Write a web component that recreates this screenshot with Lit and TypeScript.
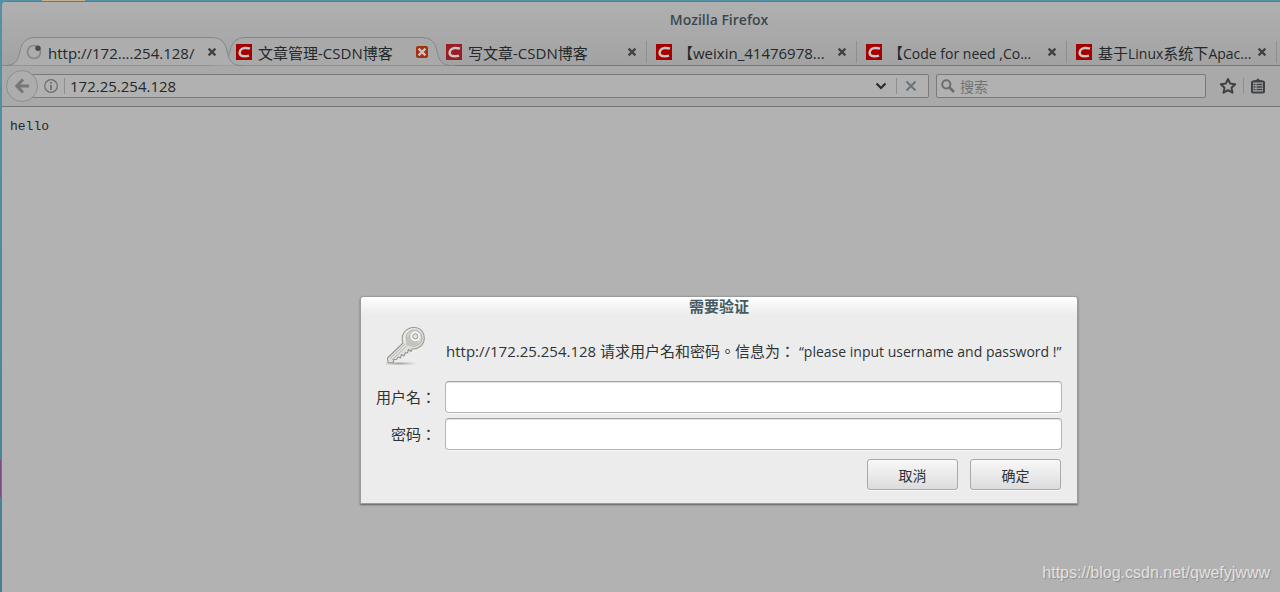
import { LitElement, html, css, svg, nothing } from "lit";
import type { TemplateResult } from "lit";
import { customElement } from "lit/decorators.js";
import { classMap } from "lit/directives/class-map.js";

interface Tab {
  title: string | TemplateResult;
  icon: "spinner" | "csdn" | "csdn-soft";
  state?: "selected" | "hover";
}

const TABS: Tab[] = [
  { title: "http://172....254.128/", icon: "spinner", state: "selected" },
  { title: "文章管理-CSDN博客", icon: "csdn", state: "hover" },
  { title: "写文章-CSDN博客", icon: "csdn-soft" },
  { title: "【weixin_41476978...", icon: "csdn" },
  { title: html`【<span class="latin">Code for need ,Co...</span>`, icon: "csdn" },
  { title: html`基于<span class="latin">Linux</span>系统下<span class="latin">Apac...</span>`, icon: "csdn" },
];

const TAB_EDGE =
  "M0 28.5 H3 C13 28.5 16 24 18 14 C20 5 24 .5 34 .5 H209 C219 .5 223 5 225 14 C227 24 230 28.5 240 28.5 H243";

@customElement("browser-tab")
class BrowserTab extends LitElement {
  static properties = { tab: { attribute: false } };
  declare tab: Tab;

  static styles = css`
    :host {
      display: block;
      flex: none;
      width: 210px;
      height: 29px;
      position: relative;
    }
    :host(.selected) {
      z-index: 2;
    }
    .edge {
      position: absolute;
      left: -14px;
      top: 0;
      width: 243px;
      height: 29px;
      stroke: #83888c;
      fill: #a9a9a9;
    }
    .edge.selected {
      fill: #adadad;
    }
    .body {
      position: relative;
      box-sizing: border-box;
      height: 22px;
      margin-top: 4px;
      padding: 0 7px 0 10px;
      display: flex;
      align-items: center;
    }
    .body.divided {
      box-shadow: 1px 0 #8f8f8f;
    }
    .icon {
      flex: none;
      width: 16px;
      height: 16px;
      margin-right: 6px;
    }
    .title {
      flex: 1;
      white-space: pre;
      line-height: 20px;
      padding-top: 2px;
    }
    .latin {
      font-size: 14px;
    }
    .close {
      flex: none;
      width: 14px;
      height: 14px;
      border: 0;
      padding: 0;
      background: none;
    }
    .close svg {
      display: block;
    }
  `;

  private icon() {
    if (this.tab.icon === "spinner") {
      return html`<svg class="icon" viewBox="0 0 16 16">
        <circle cx="8" cy="8" r="6.5" fill="none" stroke="#868686" stroke-width="1.7" />
        <circle cx="12" cy="4.3" r="2.7" fill="#4b4b4b" />
      </svg>`;
    }
    const fill = this.tab.icon === "csdn" ? "#a50000" : "#9c1c26";
    return html`<svg class="icon" viewBox="0 0 16 16">
      <rect width="16" height="16" fill=${fill} />
      <path
        d="M14 4.7 C11 3.6 5.9 3.3 4.4 6.2 C2.4 10.2 4.6 12.1 8.2 12.2 C10 12.2 11.6 12.1 13 11.6"
        fill="none" stroke="#c9c4c4" stroke-width="2.5" />
    </svg>`;
  }

  render() {
    const { state, title } = this.tab;
    const hot = state === "hover";
    return html`
      ${state
        ? html`<svg class=${classMap({ edge: true, selected: state === "selected" })} viewBox="0 0 243 29">
            <path d=${TAB_EDGE} />
          </svg>`
        : nothing}
      <div class=${classMap({ body: true, divided: !state })}>
        ${this.icon()}
        <span class="title">${title}</span>
        <button class="close" aria-label="关闭标签页">
          <svg width="14" height="14" viewBox="0 0 14 14">
            ${hot ? svg`<rect x="1" y="1" width="12" height="12" rx="2" fill="#a3300f" />` : nothing}
            <path d="M3.600 3.600 L10.400 10.400 M10.400 3.600 L3.600 10.400" stroke=${hot ? "#c4c4c4" : "#3e4345"} stroke-width="2.300" />
          </svg>
        </button>
      </div>
    `;
  }
}

@customElement("auth-dialog")
class AuthDialog extends LitElement {
  static styles = css`
    :host {
      display: block;
      width: 716px;
      box-sizing: border-box;
      background: #ececec;
      border-radius: 3px 3px 0 0;
      box-shadow: 0 0 0 1px #9b9b9b, 0 1px 2px 1px #606060;
      color: #2e3436;
      font-family: "Open Sans", "Noto Sans CJK TC", sans-serif;
    }
    .caption {
      margin: 0;
      font-size: 15px;
      line-height: 18px;
      text-align: center;
      color: #455a62;
      background: linear-gradient(#ffffff, #ececec);
      border-radius: 3px 3px 0 0;
    }
    .form {
      display: grid;
      grid-template-columns: 60px 1fr;
      column-gap: 9px;
      row-gap: 5px;
      align-items: center;
      padding: 11px 15px 13px;
    }
    .head {
      height: 50px;
      text-align: center;
    }
    .key {
      width: 40px;
      height: 40px;
    }
    .message {
      margin: 0;
      padding-left: 1px;
      white-space: nowrap;
      line-height: 20px;
    }
    .realm {
      font-size: 14px;
    }
    .label {
      text-align: right;
      white-space: nowrap;
      line-height: 20px;
    }
    .field {
      box-sizing: border-box;
      width: 100%;
      height: 32px;
      border: 1px solid #b4b4b4;
      border-top-color: #a4a4a4;
      border-radius: 4px;
      background: #fff;
      box-shadow: inset 0 1px #e2e2e2, 0 1px #f8f8f8;
      padding: 0 6px;
      font: inherit;
      outline: 0;
    }
    .actions {
      grid-column: 1 / -1;
      display: flex;
      justify-content: flex-end;
      gap: 12px;
      padding: 4px 1px 0 0;
    }
    .button {
      box-sizing: border-box;
      width: 91px;
      height: 31px;
      padding: 0;
      border: 1px solid #a9a9a9;
      border-radius: 3px;
      background: linear-gradient(#f8f8f8, #dcdcdc);
      box-shadow: 0 1px #f8f8f8;
      color: inherit;
      font: inherit;
      font-size: 14px;
    }
  `;

  render() {
    return html`
      <h2 class="caption" id="caption">需要验证</h2>
      <form class="form" role="dialog" aria-labelledby="caption" @submit=${(e: Event) => e.preventDefault()}>
        <div class="head">
          <svg class="key" viewBox="0 0 40 40">
            <defs>
              <linearGradient id="steel" x1="0" y1="0" x2="1" y2="1">
                <stop offset="0" stop-color="#fbfbf9" />
                <stop offset="1" stop-color="#c9cac4" />
              </linearGradient>
              <radialGradient id="ground">
                <stop offset="0" stop-color="#777" stop-opacity=".6" />
                <stop offset="1" stop-color="#777" stop-opacity="0" />
              </radialGradient>
            </defs>
            <ellipse cx="13" cy="37.5" rx="19" ry="2" fill="url(#ground)" />
            <path
              d="M17 17 C14 9 20 1.500 28 1.500 C35 1.500 38.500 7 38.300 12.500 C38 19 32.500 23.500 26 23 L25 25.500 L22.500 23.500 L21.500 27 L19.500 26.500 L18 30 L15.500 28.500 L14.500 32 L12 31 L10.500 33.500 L8 33.500 L7 37 L2 36.500 L1.500 32 Z"
              fill="url(#steel)" stroke="#96988f" stroke-width="1.100" stroke-linejoin="round" />
            <path d="M19 18 L4 32.500 M20.500 20 L6 34" stroke="#a3a49c" stroke-width=".8" fill="none" />
            <circle cx="28" cy="12" r="8" fill="#d6d7d1" stroke="#b0b1aa" />
            <path d="M20 19 C20 13 22 8 27 5 L33 18 C30 22 25 21 20 19 Z" fill="#c3c4bd" />
            <circle cx="29.300" cy="10.300" r="3.500" fill="#e4e4e0" stroke="#fafafa" stroke-width="2.600" />
            <circle cx="29.300" cy="10.300" r="2.600" fill="#e4e4e0" stroke="#90928a" />
          </svg>
        </div>
        <p class="message">http://172.25.254.128 请求用户名和密码。信息为： <span class="realm">“please input username and password !”</span></p>
        <label class="label" for="user">用户名：</label>
        <input class="field" id="user" type="text" />
        <label class="label" for="pass">密码：</label>
        <input class="field" id="pass" type="password" />
        <div class="actions">
          <button class="button" type="button">取消</button>
          <button class="button" type="submit">确定</button>
        </div>
      </form>
    `;
  }
}

@customElement("app-root")
class AppRoot extends LitElement {
  static styles = css`
    :host {
      display: block;
      box-sizing: border-box;
      min-height: 100vh;
      padding: 1px 0 0 2px;
      background: linear-gradient(#5591a6, #4d8ba3 50%, #457f96);
      font-family: "Open Sans", "Noto Sans CJK SC", sans-serif;
      font-size: 15px;
      color: #23282a;
      overflow: hidden;
      position: relative;
    }
    .sticker {
      position: absolute;
      left: 42px;
      top: 0;
      width: 43px;
      height: 1px;
      background: #c2b28e;
    }
    .launcher {
      position: absolute;
      left: 0;
      top: 460px;
      width: 1px;
      height: 37px;
      background: #7a4a80;
    }
    .window {
      position: relative;
      display: flex;
      flex-direction: column;
      min-height: calc(100vh - 1px);
      background: #b2b2b2;
      border-radius: 5px 0 0 0;
      overflow: hidden;
    }
    .chrome {
      background: linear-gradient(#b0b0b0, #a3a3a3 60px);
      border-top: 1px solid #6f7678;
      border-bottom: 1px solid #747474;
    }
    .title {
      margin: 0;
      padding-left: 156px;
      text-align: center;
      font-size: 14px;
      font-weight: 600;
      line-height: 35px;
      color: #3a484d;
    }
    .tabs {
      display: flex;
      padding-left: 14px;
      height: 29px;
      box-shadow: inset 0 -1px #747879;
      overflow: hidden;
    }
    .nav {
      height: 40px;
      box-sizing: border-box;
      background: #a9a9a9;
      display: flex;
      align-items: center;
      padding: 0 13px 0 4px;
    }
    .back {
      position: relative;
      z-index: 1;
      flex: none;
      box-sizing: border-box;
      width: 32px;
      height: 32px;
      padding: 0;
      border: 1px solid #8f8f8f;
      border-radius: 50%;
      background: #adadad;
      display: grid;
      place-items: center;
    }
    .box {
      box-sizing: border-box;
      height: 24px;
      border: 1px solid #787b7c;
      border-radius: 2px;
      background: #b1b1b1;
      display: flex;
      align-items: center;
    }
    .url {
      flex: 1;
      min-width: 0;
      margin-left: -12px;
      padding: 0 8px 0 17px;
    }
    .search {
      flex: none;
      width: 270px;
      margin-left: 7px;
      padding-left: 4px;
      gap: 5px;
    }
    .text {
      flex: 1;
      min-width: 0;
      height: 22px;
      padding: 0;
      border: 0;
      outline: 0;
      background: none;
      font: inherit;
      color: #23282a;
    }
    .query {
      font-size: 14px;
    }
    .query::placeholder {
      color: #707375;
      opacity: 1;
    }
    .rule {
      flex: none;
      width: 1px;
      height: 16px;
      background: #8f8f8f;
      margin: 0 5px 0 6px;
    }
    .tool {
      flex: none;
      width: 18px;
      height: 18px;
      padding: 0;
      border: 0;
      background: none;
      display: grid;
      place-items: center;
    }
    .tools {
      flex: none;
      display: flex;
      align-items: center;
      margin-left: 13px;
    }
    .page {
      margin: 0;
      padding: 11px 8px;
      font-family: "Liberation Mono", monospace;
      font-size: 13px;
      line-height: 18px;
    }
    .modal {
      position: absolute;
      inset: 296px 0 auto 156px;
      display: flex;
      justify-content: center;
    }
    .watermark {
      position: absolute;
      right: 10px;
      bottom: 9px;
      font-family: "Liberation Sans", Arial, sans-serif;
      font-size: 16px;
      line-height: 20px;
      color: #e2e2e2;
      text-shadow: 1px 1px 1px #8b8b8b;
      text-decoration: none;
    }
  `;

  render() {
    return html`
      <div class="window">
        <header class="chrome">
          <h1 class="title">Mozilla Firefox</h1>
          <div class="tabs">
            ${TABS.map((tab) => html`<browser-tab class=${tab.state ?? ""} .tab=${tab}></browser-tab>`)}
          </div>
          <nav class="nav">
            <button class="back" aria-label="后退">
              <svg width="16" height="16" viewBox="0 0 16 16" fill="none" stroke="#777" stroke-width="3">
                <path d="M9 1.500 L2.800 8 L9 14.500 M3 8 H15" />
              </svg>
            </button>
            <div class="box url">
              <svg width="14" height="14" viewBox="0 0 14 14">
                <circle cx="7" cy="7" r="6.300" fill="none" stroke="#6c6c6c" stroke-width="1.200" />
                <path d="M7 3 V4.800 M7 6 V11" stroke="#6c6c6c" stroke-width="1.700" />
              </svg>
              <span class="rule"></span>
              <input class="text" type="text" aria-label="地址" value="172.25.254.128" />
              <button class="tool" aria-label="历史">
                <svg width="12" height="12" viewBox="0 0 12 12">
                  <path d="M1.500 3.500 L6 8 L10.500 3.500" fill="none" stroke="#2b2b2b" stroke-width="2.200" />
                </svg>
              </button>
              <span class="rule"></span>
              <button class="tool" aria-label="停止">
                <svg width="12" height="12" viewBox="0 0 12 12">
                  <path d="M1.500 1.500 L10.500 10.500 M10.500 1.500 L1.500 10.500" stroke="#6a737b" stroke-width="2" />
                </svg>
              </button>
            </div>
            <div class="box search">
              <svg width="14" height="14" viewBox="0 0 14 14" fill="none" stroke="#6d6d6d">
                <circle cx="5.300" cy="5.300" r="4.100" stroke-width="2" />
                <path d="M8.500 8.500 L13 13" stroke-width="2.600" />
              </svg>
              <input class="text query" type="text" aria-label="搜索" placeholder="搜索" />
            </div>
            <div class="tools">
              <button class="tool" aria-label="书签">
                <svg width="18" height="18" viewBox="0 0 18 18">
                  <path
                    d="M9 2 L11.200 6.600 L16.200 7.200 L12.500 10.700 L13.500 15.700 L9 13.200 L4.500 15.700 L5.500 10.700 L1.800 7.200 L6.800 6.600 Z"
                    fill="none" stroke="#3f4244" stroke-width="2" stroke-linejoin="round" />
                </svg>
              </button>
              <span class="rule"></span>
              <button class="tool" aria-label="书签列表">
                <svg width="16" height="16" viewBox="0 0 16 16">
                  <rect x="2" y="3.500" width="12" height="11" rx="1" fill="none" stroke="#3f4244" stroke-width="2" />
                  <path d="M4 4 V2.200 H6 L8 .3 L10 2.200 H12 V4 Z" fill="#3f4244" />
                  <path d="M3.500 6.500 H5.500 M6.500 6.500 H12.500 M3.500 9 H5.500 M6.500 9 H12.500 M3.500 11.500 H5.500 M6.500 11.500 H12.500" stroke="#3f4244" stroke-width="1.300" />
                </svg>
              </button>
            </div>
          </nav>
        </header>
        <main>
          <p class="page">hello</p>
        </main>
        <div class="modal"><auth-dialog></auth-dialog></div>
      </div>
      <span class="sticker"></span>
      <span class="launcher"></span>
      <a class="watermark" href="https://blog.csdn.net/qwefyjwww">https://blog.csdn.net/qwefyjwww</a>
    `;
  }
}
